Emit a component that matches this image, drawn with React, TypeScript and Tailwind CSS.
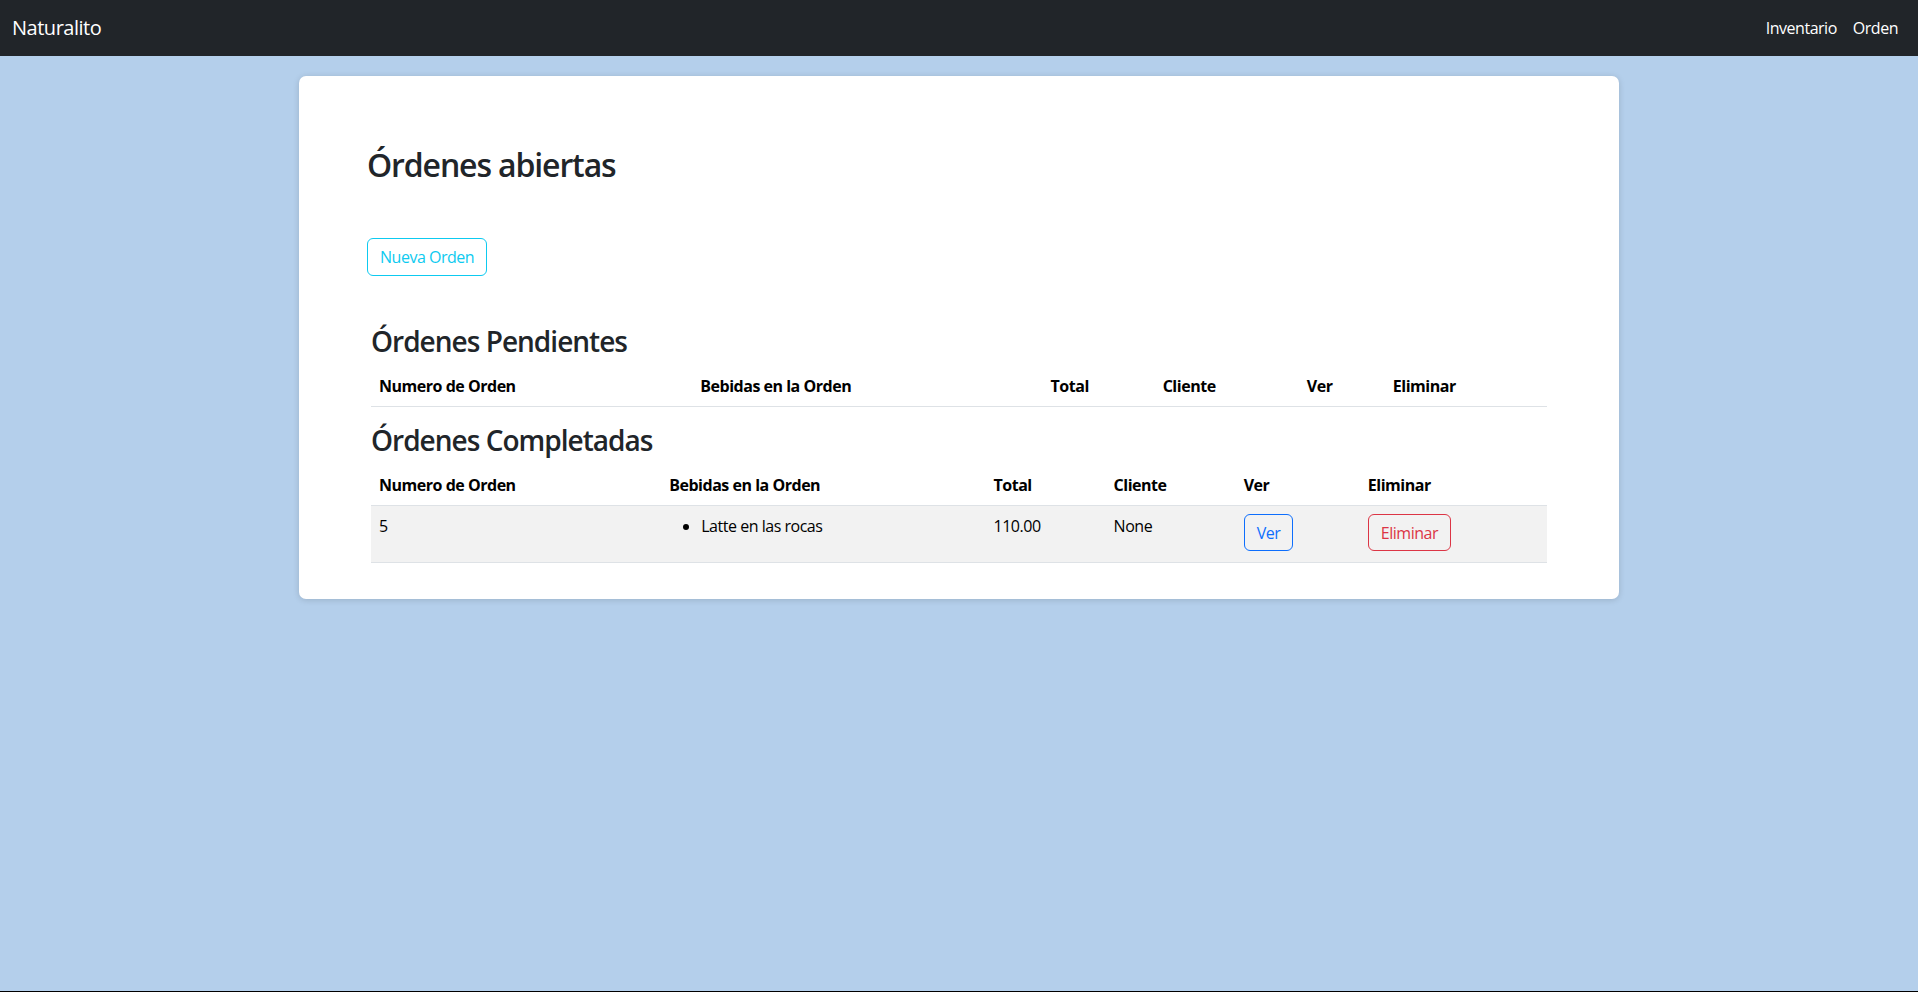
import React from "react";

const FONT = { fontFamily: '"Open Sans", "Noto Sans", sans-serif' };

type Col = { label: string; w: number };

const pendingCols: Col[] = [
  { label: "Numero de Orden", w: 321 },
  { label: "Bebidas en la Orden", w: 350 },
  { label: "Total", w: 112 },
  { label: "Cliente", w: 144 },
  { label: "Ver", w: 86 },
  { label: "Eliminar", w: 162 },
];

const completedCols: Col[] = [
  { label: "Numero de Orden", w: 290 },
  { label: "Bebidas en la Orden", w: 324 },
  { label: "Total", w: 120 },
  { label: "Cliente", w: 130 },
  { label: "Ver", w: 124 },
  { label: "Eliminar", w: 187 },
];

function Head({ cols }: { cols: Col[] }) {
  return (
    <>
      <colgroup>
        {cols.map((c) => (
          <col key={c.label} style={{ width: c.w }} />
        ))}
      </colgroup>
      <thead>
        <tr className="border-b border-[#dee2e6]">
          {cols.map((c) => (
            <th
              key={c.label}
              className="px-2 py-2 text-left font-bold text-[16px] leading-6 tracking-[-0.03em] text-black"
            >
              {c.label}
            </th>
          ))}
        </tr>
      </thead>
    </>
  );
}

export default function App() {
  return (
    <div className="flex min-h-screen flex-col bg-[#b4cfeb] text-[#212529] tracking-[-0.03em]" style={FONT}>
      <nav className="flex h-[56px] items-center justify-between bg-[#212529] px-3">
        <span className="text-[20px] leading-[30px] text-white">Naturalito</span>
        <div className="flex">
          <span className="px-2 text-[16px] leading-6 text-white">Inventario</span>
          <span className="px-2 text-[16px] leading-6 text-white">Orden</span>
        </div>
      </nav>

      <div className="flex-1">
        <div className="mx-auto mt-[20px] w-[1320px] rounded-[7px] bg-white pl-[68px] pr-[68px] pt-[70px] pb-[20px] shadow-[0_1px_6px_rgba(0,0,0,0.15)]">
          <h2 className="text-[32px] font-semibold leading-[38px] tracking-[-0.035em] text-[#212529]">Órdenes abiertas</h2>

          <button className="mt-[54px] h-[38px] rounded-[6px] border border-[#0dcaf0] px-3 text-[16px] leading-6 text-[#0dcaf0]">
            Nueva Orden
          </button>

          <div className="ml-[4px] mr-[4px] mt-[48px]">
            <h3 className="mb-2 text-[28px] font-semibold leading-[34px] tracking-[-0.035em] text-[#212529]">Órdenes Pendientes</h3>
            <table className="mb-4 w-full table-fixed border-collapse text-black">
              <Head cols={pendingCols} />
              <tbody />
            </table>

            <h3 className="mb-2 text-[28px] font-semibold leading-[34px] tracking-[-0.035em] text-[#212529]">Órdenes Completadas</h3>
            <table className="mb-4 w-full table-fixed border-collapse text-black">
              <Head cols={completedCols} />
              <tbody>
                <tr className="border-b border-[#dee2e6] bg-[#f2f2f2] align-top">
                  <td className="px-2 py-2 text-[16px] leading-6">5</td>
                  <td className="px-2 py-2 text-[16px] leading-6">
                    <ul className="mb-4 list-disc pl-8">
                      <li>Latte en las rocas</li>
                    </ul>
                  </td>
                  <td className="px-2 py-2 text-[16px] leading-6">110.00</td>
                  <td className="px-2 py-2 text-[16px] leading-6">None</td>
                  <td className="px-2 py-2">
                    <button className="h-[37px] rounded-[6px] border border-[#0d6efd] px-3 text-[16px] leading-6 text-[#0d6efd]">
                      Ver
                    </button>
                  </td>
                  <td className="px-2 py-2">
                    <button className="h-[37px] rounded-[6px] border border-[#dc3545] px-3 text-[16px] leading-6 text-[#dc3545]">
                      Eliminar
                    </button>
                  </td>
                </tr>
              </tbody>
            </table>
          </div>
        </div>
      </div>
      <div className="h-px bg-black" />
    </div>
  );
}
